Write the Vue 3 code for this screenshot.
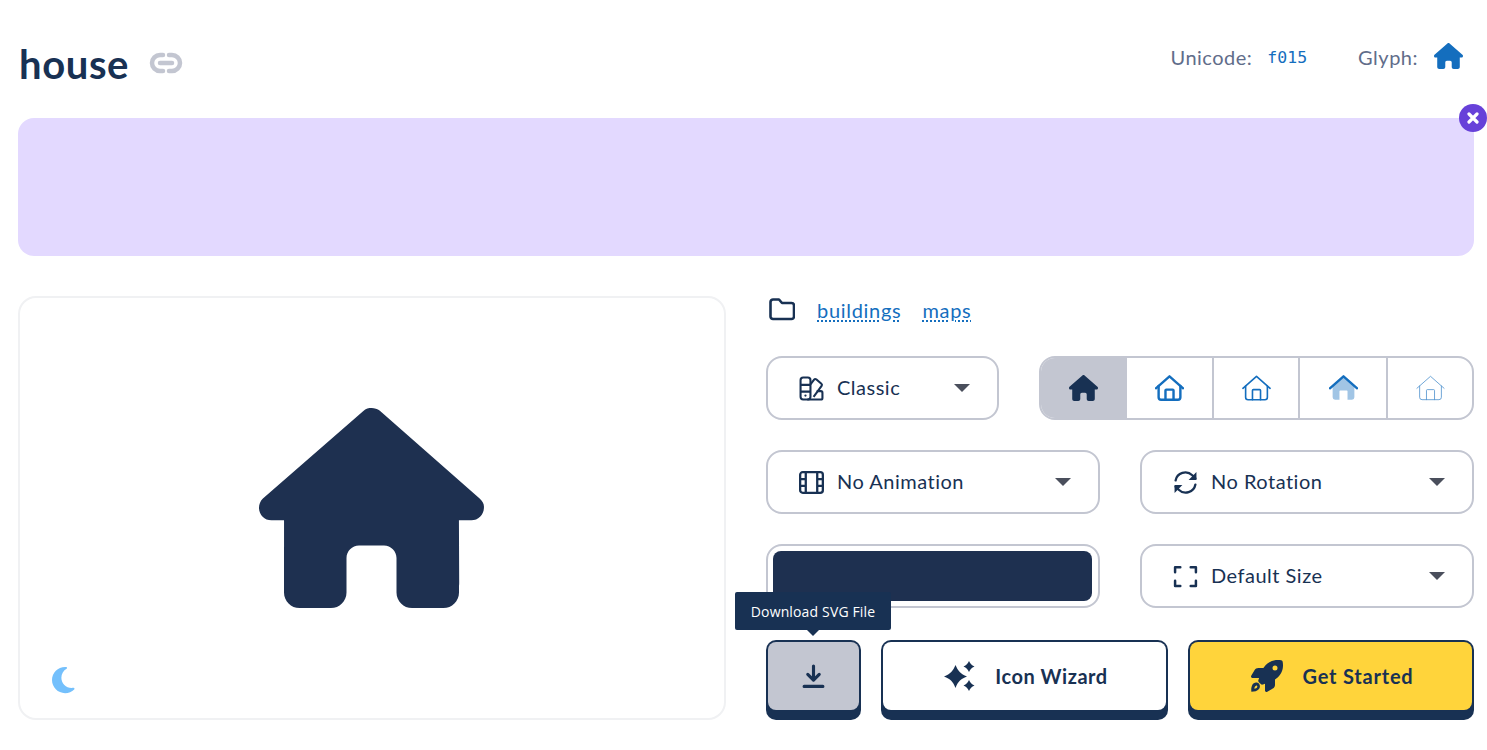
<script setup>
const housePath = 'M575.8 255.5c0 18-15 32.1-32 32.1h-32l.7 160.2c0 2.7-.2 5.4-.5 8.1V472c0 22.1-17.9 40-40 40H456c-1.1 0-2.2 0-3.3-.1c-1.4 .1-2.8 .1-4.2 .1H416 392c-22.1 0-40-17.9-40-40V448 384c0-17.7-14.3-32-32-32H256c-17.7 0-32 14.3-32 32v64 24c0 22.1-17.9 40-40 40H160 128.1c-1.5 0-3-.1-4.5-.2c-1.2 .1-2.4 .2-3.6 .2H104c-22.1 0-40-17.9-40-40V360c0-.9 0-1.9 .1-2.8V287.6H32c-18 0-32-14-32-32.1c0-9 3-17 10-24L266.4 8c7-7 15-8 22-8s15 2 21 7L564.8 231.5c8 7 12 15 11 24z'
const roof = 'M18 262L288 24L558 262'
const body = 'M72 216V440a48 48 0 0 0 48 48H456a48 48 0 0 0 48-48V216'
const door = 'M208 488V304a16 16 0 0 1 16-16H352a16 16 0 0 1 16 16V488'
const outlines = [
  { name: 'regular', width: 48 },
  { name: 'light', width: 32 },
]
</script>

<template>
  <div class="page">
    <header class="top">
      <div class="title">
        <h1>house</h1>
        <svg class="link-icon" viewBox="0 0 34 24" fill="none" stroke="#c3c6d1" stroke-width="4.500" stroke-linecap="round">
          <path d="M14 4H11a8 8 0 0 0 0 16h3" />
          <path d="M20 4h3a8 8 0 0 1 0 16h-3" />
          <path d="M11 12h12" />
        </svg>
      </div>
      <div class="meta">
        <span class="meta-label">Unicode:</span>
        <code>f015</code>
        <span class="meta-label glyph-label">Glyph:</span>
        <svg class="glyph" viewBox="0 0 576 512"><path :d="housePath" fill="#146ebe" /></svg>
      </div>
    </header>

    <div class="banner">
      <button class="close">
        <svg viewBox="0 0 12 12" fill="none" stroke="#fff" stroke-width="3.200" stroke-linecap="round">
          <path d="M2 2l8 8M10 2l-8 8" />
        </svg>
      </button>
    </div>

    <main class="content">
      <div class="preview">
        <svg class="big-house" viewBox="0 0 576 512"><path :d="housePath" fill="#1e3050" /></svg>
        <svg class="moon" viewBox="0 0 384 512">
          <path fill="#74c0fc" d="M223.5 32C100 32 0 132.3 0 256S100 480 223.5 480c60.6 0 115.5-24.2 155.8-63.4c5-4.9 6.3-12.5 3.1-18.7s-10.1-9.7-17-8.5c-9.8 1.7-19.8 2.6-30.1 2.6c-96.9 0-175.5-78.8-175.5-176c0-65.8 36-123.1 89.3-153.3c6.1-3.5 9.2-10.5 7.7-17.3s-7.3-11.9-14.3-12.5c-6.3-.5-12.6-.8-19-.8z" />
        </svg>
      </div>

      <div class="controls">
        <div class="cats">
          <svg class="folder" viewBox="0 0 26 24" fill="none" stroke="#183153" stroke-width="2.600" stroke-linejoin="round">
            <path d="M1.500 4a2.500 2.500 0 0 1 2.500-2.500h6l3 3.500h9.500a2.500 2.500 0 0 1 2.500 2.500v11a2.500 2.500 0 0 1-2.500 2.500H4a2.500 2.500 0 0 1-2.500-2.500z" />
          </svg>
          <a class="cat first">buildings</a>
          <a class="cat">maps</a>
        </div>

        <div class="row style-row">
          <div class="select">
            <svg class="sel-icon" viewBox="0 0 24 24" fill="none" stroke="#183153" stroke-width="2" stroke-linejoin="round">
              <rect x="1.500" y="1.500" width="9.500" height="21" rx="2.500" />
              <path d="M1.500 8.500h9.500M1.500 15h9.500" />
              <path d="M11 8l3.500-4.500a1.500 1.500 0 0 1 2-.3l5 4.300a1.500 1.500 0 0 1 .2 2L14 20" />
              <path d="M17 14.500h4a1.500 1.500 0 0 1 1.500 1.500v5a1.500 1.500 0 0 1-1.500 1.500H8" />
              <circle cx="6.200" cy="18.800" r="1.100" fill="#183153" stroke="none" />
            </svg>
            <span class="sel-text">Classic</span>
            <span class="caret"></span>
          </div>

          <div class="styles">
            <div class="style-cell active">
              <svg viewBox="0 0 576 512"><path :d="housePath" fill="#183153" /></svg>
            </div>
            <div v-for="o in outlines" :key="o.name" class="style-cell">
              <svg viewBox="0 0 576 512" fill="none" stroke="#146ebe" :stroke-width="o.width" stroke-linecap="round" stroke-linejoin="round">
                <path :d="roof" /><path :d="body" /><path :d="door" />
              </svg>
            </div>
            <div class="style-cell">
              <svg viewBox="0 0 576 512" stroke-linecap="round" stroke-linejoin="round">
                <path d="M72 216L288 28L504 216V440a48 48 0 0 1-48 48H368V320a16 16 0 0 0-16-16H224a16 16 0 0 0-16 16V488H120a48 48 0 0 1-48-48z" fill="#146ebe" opacity="0.4" />
                <path :d="roof" fill="none" stroke="#146ebe" stroke-width="48" />
              </svg>
            </div>
            <div class="style-cell">
              <svg viewBox="0 0 576 512" fill="none" stroke="#146ebe" stroke-width="16" stroke-linecap="round" stroke-linejoin="round" opacity="0.75">
                <path :d="roof" /><path :d="body" /><path :d="door" />
              </svg>
            </div>
          </div>
        </div>

        <div class="row two">
          <div class="select">
            <svg class="sel-icon" viewBox="0 0 24 24" fill="none" stroke="#183153" stroke-width="2.200" stroke-linejoin="round">
              <rect x="1.100" y="2.100" width="21.800" height="19.800" rx="2.500" />
              <path d="M6.500 2v20M17.500 2v20M1 8.700h5.500M1 15.300h5.500M17.500 8.700H23M17.500 15.300H23" />
            </svg>
            <span class="sel-text">No Animation</span>
            <span class="caret"></span>
          </div>
          <div class="select">
            <svg class="sel-icon" viewBox="0 0 24 24" fill="none" stroke="#183153" stroke-width="2.200" stroke-linecap="round">
              <path d="M2.500 10A9.500 9.500 0 0 1 18.500 5l3 3" />
              <path d="M21.500 14A9.500 9.500 0 0 1 5.500 19l-3-3" />
              <path d="M22.500 2v7.500H15z" fill="#183153" stroke="none" />
              <path d="M1.500 22v-7.500H9z" fill="#183153" stroke="none" />
            </svg>
            <span class="sel-text">No Rotation</span>
            <span class="caret"></span>
          </div>
        </div>

        <div class="row two">
          <div class="color-box"><div class="color-fill"></div></div>
          <div class="select">
            <svg class="sel-icon" viewBox="0 0 24 24" fill="none" stroke="#183153" stroke-width="2.400" stroke-linecap="round" stroke-linejoin="round">
              <path d="M2 8V3h5M17 3h5v5M22 16v5h-5M7 21H2v-5" />
            </svg>
            <span class="sel-text">Default Size</span>
            <span class="caret"></span>
          </div>
        </div>

        <div class="actions">
          <div class="download-wrap">
            <div class="tooltip">Download SVG File</div>
            <button class="action">
              <span class="face grey">
                <svg class="dl-icon" viewBox="0 0 24 24" fill="none" stroke="#183153" stroke-width="3" stroke-linecap="round" stroke-linejoin="round">
                  <path d="M12 2v13M6.500 10l5.500 5.500L17.500 10M3 21.500h18" />
                </svg>
              </span>
            </button>
          </div>
          <button class="action">
            <span class="face">
              <svg class="act-icon" viewBox="0 0 32 30">
                <path fill="#183153" d="M11.500 4c2.500 6 5 9 11.500 11.500c-6.500 2.500-9 5-11.500 11.500c-2.500-6.500-5-9-11.500-11.500C6.500 13 9 10 11.500 4z" />
                <path fill="#183153" d="M25 0c1.200 2.800 2.600 4.300 5.500 5.500c-2.900 1.200-4.300 2.700-5.500 5.500c-1.200-2.800-2.600-4.300-5.500-5.500C22.400 4.300 23.800 2.800 25 0z" />
                <path fill="#183153" d="M25 19c1.200 2.800 2.600 4.300 5.500 5.500c-2.900 1.200-4.300 2.700-5.500 5.500c-1.200-2.800-2.600-4.300-5.500-5.500c2.900-1.200 4.300-2.700 5.500-5.500z" />
              </svg>
              <span class="act-text">Icon Wizard</span>
            </span>
          </button>
          <button class="action">
            <span class="face yellow">
              <svg class="act-icon rocket" viewBox="0 0 512 512">
                <path fill="#183153" fill-rule="evenodd" d="M156.600 384.900L125.700 354c-8.500-8.500-11.500-20.800-7.700-32.200c3-8.900 7-20.500 11.800-33.800L24 288c-8.600 0-16.600-4.600-20.900-12.100s-4.200-16.700 .2-24.100l52.500-88.500c13-21.900 36.500-35.300 61.900-35.300l82.300 0c2.400-4 4.800-7.700 7.200-11.300C289.100-4.100 411.100-8.100 483.900 5.300c11.600 2.100 20.600 11.200 22.800 22.800c13.400 72.900 9.300 194.800-111.400 276.700c-3.500 2.400-7.300 4.800-11.300 7.200v82.300c0 25.400-13.400 49-35.300 61.900l-88.500 52.500c-7.400 4.400-16.600 4.500-24.100 .2s-12.100-12.200-12.100-20.900V380.800c-14.100 4.900-26.400 8.900-35.700 11.900c-11.200 3.600-23.400 .5-31.800-7.800zM384 168a40 40 0 1 0 0-80 40 40 0 1 0 0 80z" />
                <path fill="#183153" fill-rule="evenodd" d="M6 506c-10-70 16-158 88-146c50 8 62 64 34 104c-28 36-72 42-122 42zM54 458c22 0 40-8 46-26c4-16-8-26-20-22c-18 6-26 26-26 48z" />
              </svg>
              <span class="act-text wide">Get Started</span>
            </span>
          </button>
        </div>
      </div>
    </main>
  </div>
</template>

<style scoped>
.page {
  width: 1487px;
  box-sizing: border-box;
  padding: 40px 13px 0 18px;
  color: #183153;
  font-family: Lato, "Open Sans", sans-serif;
}

.top {
  height: 48px;
  margin-bottom: 30px;
  display: flex;
  align-items: center;
  justify-content: space-between;
}

.title {
  display: flex;
  align-items: center;
  padding-left: 1px;
}

h1 {
  margin: 0;
  font-size: 40px;
  line-height: 48px;
  font-weight: 700;
  letter-spacing: 0.600px;
}

.link-icon {
  width: 34px;
  height: 24px;
  margin: 0 0 2px 20px;
}

.meta {
  display: flex;
  align-items: center;
  padding: 0 11px 14px 0;
  font-size: 20px;
  color: #616d8a;
}

.meta-label {
  letter-spacing: 0.500px;
}

code {
  margin-left: 15px;
  font-family: "DejaVu Sans Mono", monospace;
  font-size: 16.500px;
  color: #146ebe;
}

.glyph-label {
  margin-left: 51px;
}

.glyph {
  width: 29px;
  height: 26px;
  margin: 0 0 2px 16px;
}

.banner {
  position: relative;
  height: 138px;
  margin-bottom: 40px;
  background: #e3d9ff;
  border-radius: 16px;
}

.close {
  position: absolute;
  top: -14px;
  right: -13px;
  width: 28px;
  height: 28px;
  padding: 8px;
  border: none;
  border-radius: 50%;
  background: #6741d9;
}

.close svg {
  display: block;
}

.content {
  display: grid;
  grid-template-columns: 708px 708px;
  gap: 40px;
}

.preview {
  position: relative;
  height: 424px;
  box-sizing: border-box;
  display: flex;
  align-items: center;
  justify-content: center;
  padding-right: 2px;
  border: 2px solid #f0f1f3;
  border-radius: 18px;
}

.big-house {
  width: 225px;
  height: 200px;
}

.moon {
  position: absolute;
  left: 32px;
  bottom: 23px;
  width: 22.500px;
  height: 30px;
}

.controls {
  display: flex;
  flex-direction: column;
  gap: 30px;
}

.cats {
  height: 30px;
  display: flex;
  align-items: center;
  padding: 0 0 2px 3px;
  box-sizing: border-box;
  font-size: 20px;
}

.folder {
  width: 26px;
  height: 24px;
  margin-right: 22px;
}

.cat {
  margin-right: 21px;
  color: #146ebe;
  letter-spacing: 0.700px;
  text-decoration: underline dotted #146ebe;
  text-underline-offset: 2px;
}

.row {
  display: grid;
  gap: 40px;
}

.style-row {
  grid-template-columns: 233px 435px;
}

.two {
  grid-template-columns: 334px 334px;
}

.select {
  height: 64px;
  box-sizing: border-box;
  display: flex;
  align-items: center;
  padding: 0 27px 0 31px;
  border: 2px solid #c3c6d1;
  border-radius: 16px;
  background: #fff;
}

.sel-icon {
  width: 25px;
  height: 25px;
  flex: none;
}

.sel-text {
  flex: 1;
  margin-left: 13px;
  padding-bottom: 2px;
  font-size: 20px;
  letter-spacing: 0.500px;
  color: #183153;
}

.caret {
  width: 0;
  height: 0;
  border-left: 8px solid transparent;
  border-right: 8px solid transparent;
  border-top: 8px solid #4a4f5c;
}

.styles {
  height: 64px;
  box-sizing: border-box;
  display: grid;
  grid-template-columns: 86px 87px 86px 88px 1fr;
  border: 2px solid #c3c6d1;
  border-radius: 16px;
  overflow: hidden;
}

.style-cell {
  display: flex;
  align-items: center;
  justify-content: center;
  border-right: 2px solid #c3c6d1;
}

.style-cell:last-child {
  border-right: none;
}

.style-cell svg {
  width: 29px;
  height: 26px;
}

.style-cell.active {
  background: #c3c6d1;
}

.color-box {
  height: 64px;
  box-sizing: border-box;
  padding: 5px 6px 5px 5px;
  border: 2px solid #c3c6d1;
  border-radius: 16px;
}

.color-fill {
  height: 100%;
  background: #1e3050;
  border-radius: 8px;
}

.actions {
  display: grid;
  grid-template-columns: 95px 287px 1fr;
  gap: 20px;
  margin-top: 2px;
}

.download-wrap {
  position: relative;
}

.tooltip {
  position: absolute;
  left: -31px;
  top: -48px;
  width: 156px;
  height: 38px;
  display: flex;
  align-items: center;
  justify-content: center;
  border-radius: 2px;
  background: #183153;
  color: #fff;
  font-family: "Open Sans", sans-serif;
  font-size: 14px;
  letter-spacing: 0.150px;
  white-space: nowrap;
}

.tooltip::after {
  content: "";
  position: absolute;
  left: 72px;
  bottom: -6px;
  border-left: 6px solid transparent;
  border-right: 6px solid transparent;
  border-top: 6px solid #183153;
}

.action {
  display: block;
  width: 100%;
  height: 80px;
  padding: 2px 2px 10px;
  border: none;
  border-radius: 10px;
  background: #183153;
  font: inherit;
}

.face {
  height: 100%;
  display: flex;
  align-items: center;
  justify-content: center;
  gap: 19px;
  border-radius: 8px;
  background: #fff;
}

.face.grey {
  background: #c3c6d1;
}

.face.yellow {
  background: #ffd43b;
}

.dl-icon {
  width: 25px;
  height: 25px;
}

.act-icon {
  width: 32px;
  height: 30px;
  margin-left: 3px;
}

.act-icon.rocket {
  height: 32px;
}

.act-text {
  font-size: 20px;
  font-weight: 700;
  letter-spacing: 0.550px;
  color: #183153;
}

.act-text.wide {
  letter-spacing: 0.800px;
}
</style>

<style>
html, body {
  background: #fff;
}
</style>
